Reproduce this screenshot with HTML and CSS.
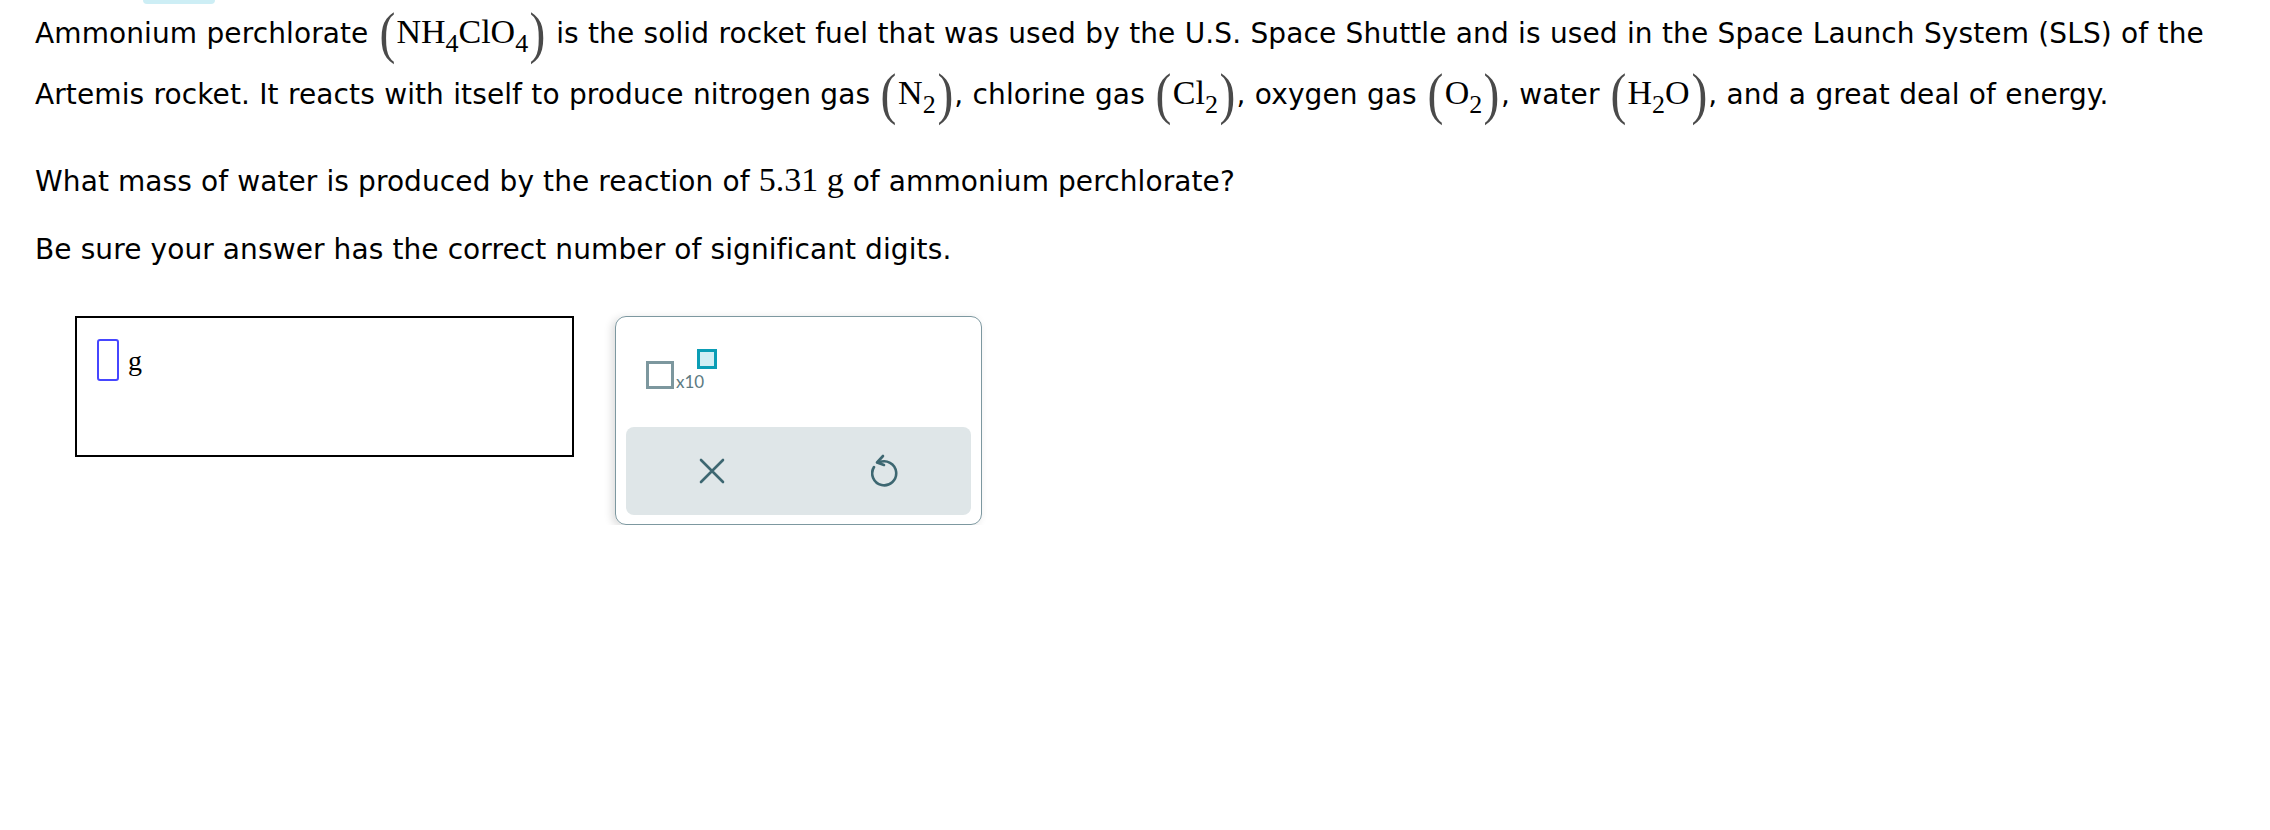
FILE: index.html
```html
<!DOCTYPE html>
<html lang="en">
<head>
<meta charset="utf-8">
<title>Ammonium perchlorate</title>
<link rel="stylesheet" href="styles.css">
</head>
<body>
<div class="page">
  <div class="tab"></div>
  <p class="lead">Ammonium perchlorate <span class="m"><span class="paren">(</span>NH<sub>4</sub>ClO<sub>4</sub><span class="paren">)</span></span> is the solid rocket fuel that was used by the U.S. Space Shuttle and is used in the Space Launch System (SLS) of the<br>Artemis rocket. It reacts with itself to produce nitrogen gas <span class="m"><span class="paren">(</span>N<sub>2</sub><span class="paren">)</span></span>, chlorine gas <span class="m"><span class="paren">(</span>Cl<sub>2</sub><span class="paren">)</span></span>, oxygen gas <span class="m"><span class="paren">(</span>O<sub>2</sub><span class="paren">)</span></span>, water <span class="m"><span class="paren">(</span>H<sub>2</sub>O<span class="paren">)</span></span>, and a great deal of energy.</p>
  <p class="q">What mass of water is produced by the reaction of <span class="m">5.31 g</span> of ammonium perchlorate?</p>
  <p class="q last">Be sure your answer has the correct number of significant digits.</p>

  <div class="answer-row">
    <div class="answer-box">
      <span class="cursor"></span>
      <span class="unit">g</span>
    </div>
    <div class="panel">
      <div class="panel-top">
        <span class="sci">
          <span class="sci-box"></span>
          <span class="sci-text">x10</span>
          <span class="sci-sup"></span>
        </span>
      </div>
      <div class="panel-btns">
        <span class="btn">
          <svg width="26" height="26" viewBox="0 0 26 26" aria-label="clear">
            <path d="M2 2 L24 24 M24 2 L2 24" stroke="#3d6771" stroke-width="2.6" stroke-linecap="round" fill="none"/>
          </svg>
        </span>
        <span class="btn">
          <svg width="28" height="34" viewBox="0 0 28 34" aria-label="undo">
            <path d="M8 8.5 A12 12 0 1 1 3 13" stroke="#3d6771" stroke-width="2.6" stroke-linecap="round" fill="none"/>
            <path d="M12 2 L6 8.5 L13 11" stroke="#3d6771" stroke-width="2.6" stroke-linecap="round" stroke-linejoin="round" fill="none"/>
          </svg>
        </span>
      </div>
    </div>
  </div>
</div>
</body>
</html>
```
FILE: styles.css
```css
html, body {
  margin: 0;
  background: #fff;
}
body {
  font-family: "DejaVu Sans", Verdana, sans-serif;
  color: #000;
  letter-spacing: 0.1px;
}
.page {
  padding-left: 35px;
}
.tab {
  width: 72px;
  height: 4px;
  margin-left: 108px;
  background: #cdeef5;
  border-radius: 0 0 12px 12px;
}
.lead {
  margin: -1.5px 0 37px;
  font-size: 28px;
  line-height: 61px;
  white-space: nowrap;
  word-spacing: 0.3px;
}
.q {
  margin: 0 0 28px;
  font-size: 28px;
  line-height: 40px;
}
.q.last {
  margin-bottom: 46px;
}
.m {
  font-family: "Liberation Serif", "Times New Roman", serif;
  font-size: 34px;
  line-height: 1;
  letter-spacing: 0;
  word-spacing: 0;
}
.m sub {
  font-size: 26px;
  line-height: 0;
  vertical-align: -9px;
}
.paren {
  display: inline-block;
  font-size: 56px;
  line-height: 0;
  vertical-align: -9px;
  color: #4a4a4a;
  transform: scaleX(0.85);
}
.answer-row {
  display: flex;
  align-items: flex-start;
  gap: 41px;
  margin-left: 40px;
}
.answer-box {
  box-sizing: border-box;
  width: 499px;
  height: 141px;
  border: 2px solid #000;
  padding: 21px 0 0 20px;
  display: flex;
  align-items: flex-start;
}
.cursor {
  box-sizing: border-box;
  width: 22px;
  height: 42px;
  border: 2px solid #4646ff;
  border-radius: 3px;
}
.unit {
  font-family: "Liberation Serif", "Times New Roman", serif;
  font-size: 28px;
  line-height: 28px;
  margin: 8px 0 0 9px;
}
.panel {
  box-sizing: border-box;
  width: 367px;
  height: 209px;
  border: 1.5px solid #7d98a0;
  border-radius: 11px;
  box-shadow: -3px 2px 9px rgba(0, 0, 0, 0.14);
  padding: 0 10px 9px 10px;
  display: flex;
  flex-direction: column;
}
.panel-top {
  flex: 1;
  padding: 32px 0 0 20px;
}
.sci {
  display: inline-flex;
  align-items: flex-end;
  height: 40px;
}
.sci-box {
  box-sizing: border-box;
  width: 28px;
  height: 28px;
  border: 3px solid #7c979e;
}
.sci-text {
  font-family: Lato, "Open Sans", sans-serif;
  font-size: 17px;
  line-height: 16px;
  color: #5c7a82;
  letter-spacing: 0;
  margin: 0 0 0 2px;
  position: relative;
  top: 1px;
}
.sci-sup {
  align-self: flex-start;
  box-sizing: border-box;
  width: 20px;
  height: 20px;
  border: 3px solid #0b9db5;
  background: #d1eef4;
  margin-left: -7px;
}
.panel-btns {
  height: 88px;
  background: #dfe6e8;
  border-radius: 8px;
  display: grid;
  grid-template-columns: 1fr 1fr;
}
.btn {
  display: flex;
  align-items: center;
  justify-content: center;
}
```
